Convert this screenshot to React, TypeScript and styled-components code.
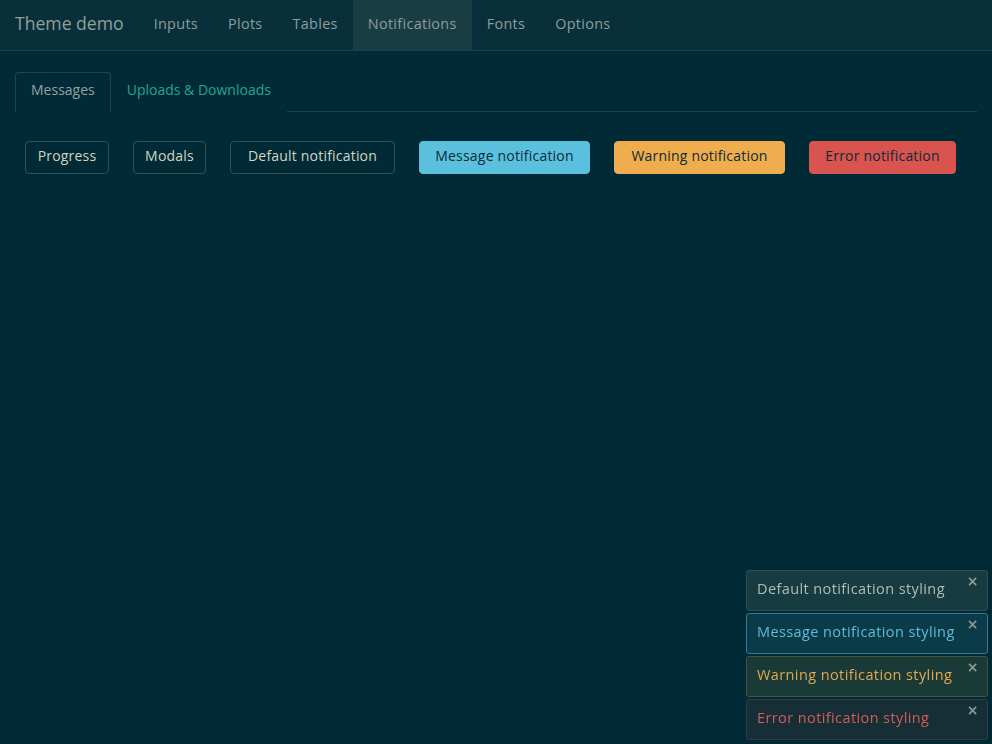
import React from "react";
import styled, { createGlobalStyle } from "styled-components";

const Global = createGlobalStyle`
  html, body { margin: 0; padding: 0; background: #002b36; }
  body { font-family: "Open Sans", "DejaVu Sans", sans-serif; color: #93a1a1; height: 744px; overflow: hidden; }
  * { box-sizing: border-box; }
`;

const Navbar = styled.nav`
  display: flex;
  align-items: stretch;
  height: 51px;
  background: #09303a;
  border-bottom: 1px solid #1c4148;
`;

const Brand = styled.div`
  padding: 0 15px 4px;
  display: flex;
  align-items: center;
  font-size: 17.6px;
  color: #8fa09c;
`;

const NavItem = styled.div<{ $active?: boolean }>`
  padding: 0 15px 4px;
  display: flex;
  align-items: center;
  font-size: 14.4px;
  letter-spacing: 0.32px;
  color: #8c9d9a;
  background: ${(p) => (p.$active ? "#1a3c43" : "transparent")};
`;

const Container = styled.div`
  padding: 21px 15px 0;
`;

const Tabs = styled.div`
  display: flex;
  border-bottom: 1px solid #1f444b;
  width: 962px;
`;

const Tab = styled.div<{ $active?: boolean }>`
  padding: 0 15px 6px;
  height: 40px;
  display: flex;
  align-items: center;
  font-size: 14px;
  margin-bottom: -1px;
  border: 1px solid ${(p) => (p.$active ? "#1f444b" : "transparent")};
  border-bottom-color: ${(p) => (p.$active ? "#002b36" : "transparent")};
  border-radius: 4px 4px 0 0;
  color: ${(p) => (p.$active ? "#93a1a1" : "#2aa198")};
  background: #002b36;
`;

const ButtonRow = styled.div`
  display: flex;
  gap: 24px;
  padding: 29px 10px 0;
`;

type Kind = "default" | "info" | "warning" | "danger";

const btnBg: Record<Kind, string> = {
  default: "transparent",
  info: "#5bc0de",
  warning: "#f0ad4e",
  danger: "#d9534f",
};

const Button = styled.div<{ $kind: Kind; $w: number }>`
  width: ${(p) => p.$w}px;
  height: 33px;
  padding: 0 0 5px;
  display: flex;
  align-items: center;
  justify-content: center;
  font-size: 14px;
  letter-spacing: 0.2px;
  border-radius: 4px;
  border: 1px solid ${(p) => (p.$kind === "default" ? "#2e5056" : btnBg[p.$kind])};
  background: ${(p) => btnBg[p.$kind]};
  color: ${(p) => (p.$kind === "default" ? "#d4d3c0" : "#0b2b35")};
`;

const Panel = styled.div`
  position: fixed;
  right: 4px;
  bottom: 4px;
  width: 242px;
  display: flex;
  flex-direction: column;
  gap: 2px;
`;

const notifStyles: Record<Kind, { bg: string; border: string; color: string }> = {
  default: { bg: "#163b41", border: "#2d4f53", color: "#b4bcb1" },
  info: { bg: "#0b3b48", border: "#2d7a92", color: "#5bbcd8" },
  warning: { bg: "#1a3a37", border: "#445539", color: "#e3a74f" },
  danger: { bg: "#162f37", border: "#333d41", color: "#d65a55" },
};

const Notif = styled.div<{ $kind: Kind }>`
  position: relative;
  height: 41px;
  padding: 0 10px 5px;
  display: flex;
  align-items: center;
  font-size: 14.5px;
  letter-spacing: 0.4px;
  border-radius: 3px;
  background: ${(p) => notifStyles[p.$kind].bg};
  border: 1px solid ${(p) => notifStyles[p.$kind].border};
  color: ${(p) => notifStyles[p.$kind].color};
`;

const Close = styled.span`
  position: absolute;
  top: 2px;
  right: 8px;
  font-size: 14px;
  font-weight: bold;
  color: #8a9894;
  font-family: "DejaVu Sans", sans-serif;
`;

export default function App() {
  return (
    <>
      <Global />
      <Navbar>
        <Brand>Theme demo</Brand>
        <NavItem>Inputs</NavItem>
        <NavItem>Plots</NavItem>
        <NavItem>Tables</NavItem>
        <NavItem $active>Notifications</NavItem>
        <NavItem>Fonts</NavItem>
        <NavItem>Options</NavItem>
      </Navbar>
      <Container>
        <Tabs>
          <Tab $active>Messages</Tab>
          <Tab>Uploads &amp; Downloads</Tab>
        </Tabs>
        <ButtonRow>
          <Button $kind="default" $w={84}>Progress</Button>
          <Button $kind="default" $w={73}>Modals</Button>
          <Button $kind="default" $w={165}>Default notification</Button>
          <Button $kind="info" $w={171}>Message notification</Button>
          <Button $kind="warning" $w={171}>Warning notification</Button>
          <Button $kind="danger" $w={147}>Error notification</Button>
        </ButtonRow>
      </Container>
      <Panel>
        <Notif $kind="default">Default notification styling<Close>×</Close></Notif>
        <Notif $kind="info">Message notification styling<Close>×</Close></Notif>
        <Notif $kind="warning">Warning notification styling<Close>×</Close></Notif>
        <Notif $kind="danger">Error notification styling<Close>×</Close></Notif>
      </Panel>
    </>
  );
}
